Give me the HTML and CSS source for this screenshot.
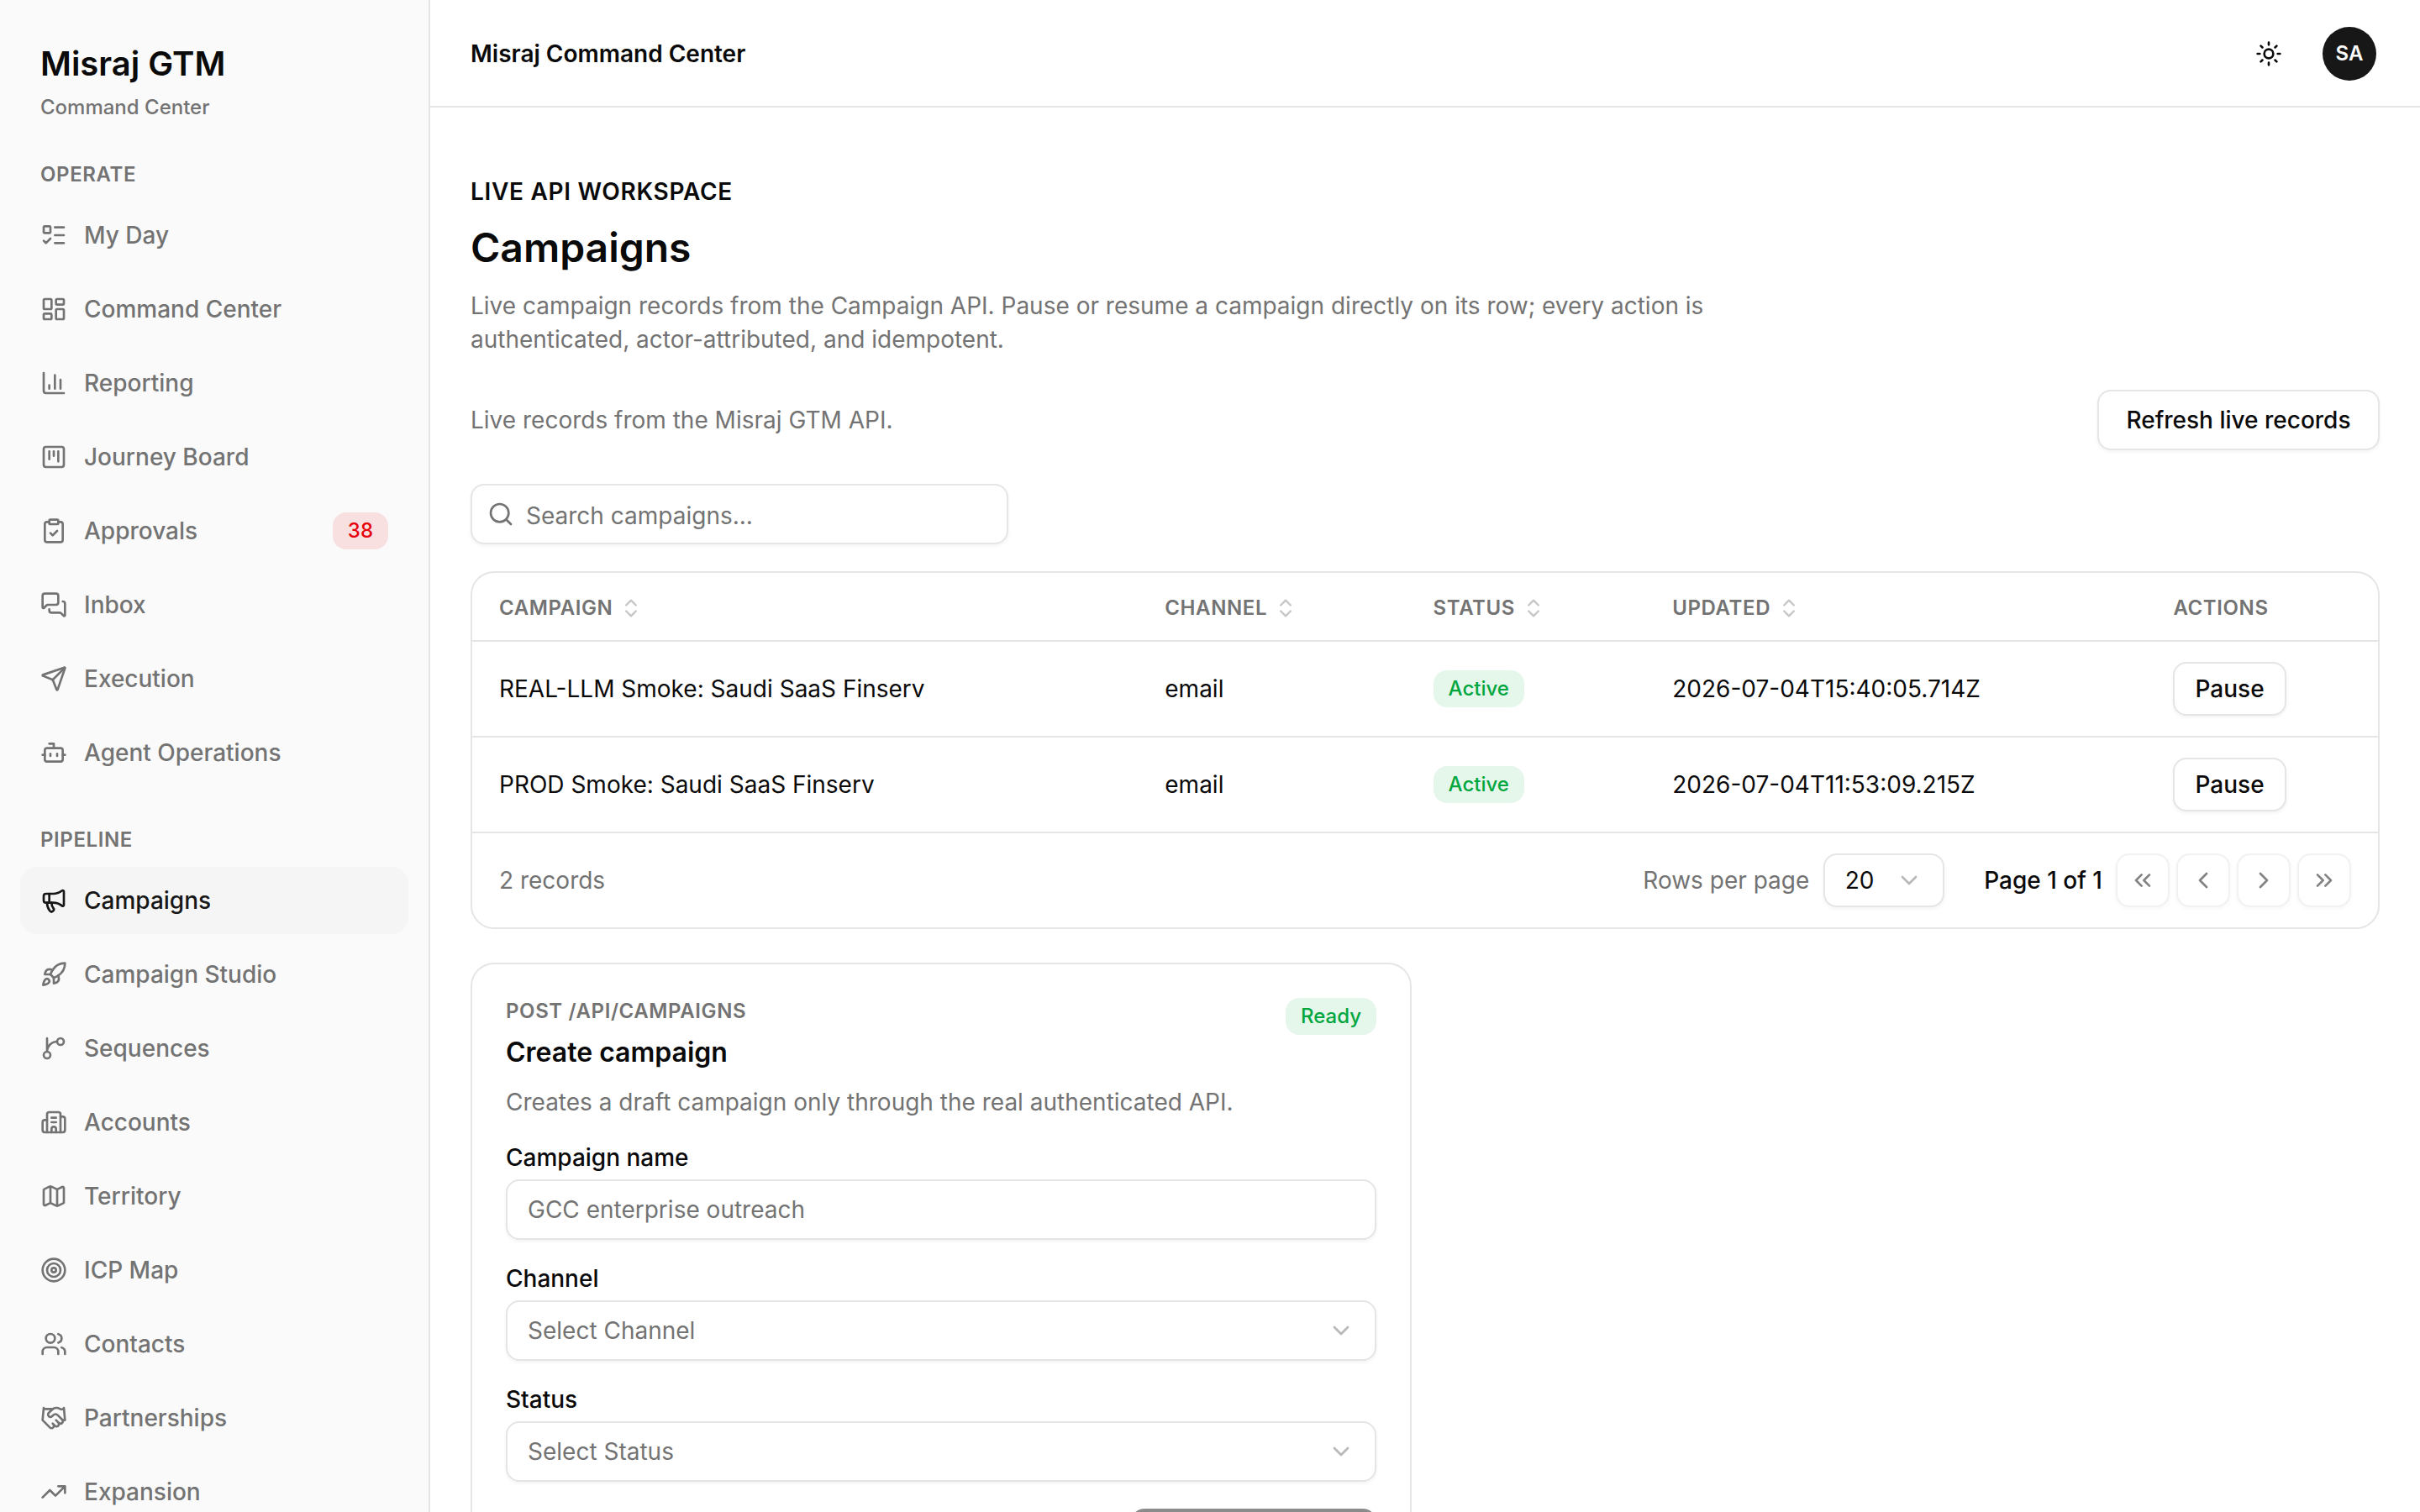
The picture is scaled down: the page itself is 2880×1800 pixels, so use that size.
FILE: index.html
```html
<!DOCTYPE html>
<html lang="en">
<head>
<meta charset="utf-8">
<title>Misraj Command Center</title>
<link rel="stylesheet" href="styles.css">
</head>
<body>
<div class="app">
  <aside class="sidebar">
    <div class="brand">
      <div class="brand-name">Misraj GTM</div>
      <div class="brand-sub">Command Center</div>
    </div>
    <nav class="nav">
      <section class="nav-group">
        <h2 class="nav-heading">Operate</h2>
        <a class="nav-item"><svg class="icon" viewBox="0 0 24 24"><path d="M13 5h8M13 12h8M13 19h8M3 17l2 2 4-4"/><rect x="3" y="4" width="6" height="6" rx="1"/></svg><span>My Day</span></a>
        <a class="nav-item"><svg class="icon" viewBox="0 0 24 24"><rect width="7" height="9" x="3" y="3" rx="1"/><rect width="7" height="5" x="14" y="3" rx="1"/><rect width="7" height="9" x="14" y="12" rx="1"/><rect width="7" height="5" x="3" y="16" rx="1"/></svg><span>Command Center</span></a>
        <a class="nav-item"><svg class="icon" viewBox="0 0 24 24"><path d="M3 3v16a2 2 0 0 0 2 2h16M18 17V9M13 17V5M8 17v-3"/></svg><span>Reporting</span></a>
        <a class="nav-item"><svg class="icon" viewBox="0 0 24 24"><rect width="18" height="18" x="3" y="3" rx="2"/><path d="M8 7v7M12 7v4M16 7v9"/></svg><span>Journey Board</span></a>
        <a class="nav-item"><svg class="icon" viewBox="0 0 24 24"><rect width="8" height="4" x="8" y="2" rx="1"/><path d="M16 4h2a2 2 0 0 1 2 2v14a2 2 0 0 1-2 2H6a2 2 0 0 1-2-2V6a2 2 0 0 1 2-2h2M9 14l2 2 4-4"/></svg><span>Approvals</span><span class="badge badge-red nav-count">38</span></a>
        <a class="nav-item"><svg class="icon" viewBox="0 0 24 24"><path d="M16 10a2 2 0 0 1-2 2H6.828a2 2 0 0 0-1.414.586l-2.202 2.202A.71.71 0 0 1 2 14.286V4a2 2 0 0 1 2-2h10a2 2 0 0 1 2 2z"/><path d="M20 9a2 2 0 0 1 2 2v10.286a.71.71 0 0 1-1.212.502l-2.202-2.202A2 2 0 0 0 17.172 19H10a2 2 0 0 1-2-2v-1"/></svg><span>Inbox</span></a>
        <a class="nav-item"><svg class="icon" viewBox="0 0 24 24"><path d="M14.536 21.686a.5.5 0 0 0 .937-.024l6.5-19a.496.496 0 0 0-.635-.635l-19 6.5a.5.5 0 0 0-.024.937l7.93 3.18a2 2 0 0 1 1.112 1.11z"/><path d="m21.854 2.147-10.94 10.939"/></svg><span>Execution</span></a>
        <a class="nav-item"><svg class="icon" viewBox="0 0 24 24"><path d="M12 8V4H8"/><rect width="16" height="12" x="4" y="8" rx="2"/><path d="M2 14h2M20 14h2M15 13v2M9 13v2"/></svg><span>Agent Operations</span></a>
      </section>
      <section class="nav-group">
        <h2 class="nav-heading">Pipeline</h2>
        <a class="nav-item is-active"><svg class="icon" viewBox="0 0 24 24"><path d="M11 6a13 13 0 0 0 8.4-2.8A1 1 0 0 1 21 4v12a1 1 0 0 1-1.6.8A13 13 0 0 0 11 14H5a2 2 0 0 1-2-2V8a2 2 0 0 1 2-2z"/><path d="M6 14a12 12 0 0 0 2.4 7.2 2 2 0 0 0 3.2-2.4A8 8 0 0 1 10 14M8 6v8"/></svg><span>Campaigns</span></a>
        <a class="nav-item"><svg class="icon" viewBox="0 0 24 24"><path d="M4.5 16.5c-1.5 1.26-2 5-2 5s3.74-.5 5-2c.71-.84.7-2.13-.09-2.91a2.18 2.18 0 0 0-2.91-.09z"/><path d="m12 15-3-3a22 22 0 0 1 2-3.95A12.88 12.88 0 0 1 22 2c0 2.72-.78 7.5-6 11a22.35 22.35 0 0 1-4 2z"/><path d="M9 12H4s.55-3.03 2-4c1.62-1.08 5 0 5 0M12 15v5s3.03-.55 4-2c1.08-1.62 0-5 0-5"/></svg><span>Campaign Studio</span></a>
        <a class="nav-item"><svg class="icon" viewBox="0 0 24 24"><path d="M15 6a9 9 0 0 0-9 9V3"/><circle cx="18" cy="6" r="3"/><circle cx="6" cy="18" r="3"/></svg><span>Sequences</span></a>
        <a class="nav-item"><svg class="icon" viewBox="0 0 24 24"><path d="M10 12h4M10 8h4M14 21v-3a2 2 0 0 0-4 0v3"/><path d="M6 10H4a2 2 0 0 0-2 2v7a2 2 0 0 0 2 2h16a2 2 0 0 0 2-2V9a2 2 0 0 0-2-2h-2"/><path d="M6 21V5a2 2 0 0 1 2-2h8a2 2 0 0 1 2 2v16"/></svg><span>Accounts</span></a>
        <a class="nav-item"><svg class="icon" viewBox="0 0 24 24"><path d="M14.106 5.553a2 2 0 0 0 1.788 0l3.659-1.83A1 1 0 0 1 21 4.619v12.764a1 1 0 0 1-.553.894l-4.553 2.277a2 2 0 0 1-1.788 0l-4.212-2.106a2 2 0 0 0-1.788 0l-3.659 1.83A1 1 0 0 1 3 19.381V6.618a1 1 0 0 1 .553-.894l4.553-2.277a2 2 0 0 1 1.788 0zM15 5.764v15M9 3.236v15"/></svg><span>Territory</span></a>
        <a class="nav-item"><svg class="icon" viewBox="0 0 24 24"><circle cx="12" cy="12" r="10"/><circle cx="12" cy="12" r="6"/><circle cx="12" cy="12" r="2"/></svg><span>ICP Map</span></a>
        <a class="nav-item"><svg class="icon" viewBox="0 0 24 24"><path d="M16 21v-2a4 4 0 0 0-4-4H6a4 4 0 0 0-4 4v2M16 3.128a4 4 0 0 1 0 7.744M22 21v-2a4 4 0 0 0-3-3.87"/><circle cx="9" cy="7" r="4"/></svg><span>Contacts</span></a>
        <a class="nav-item"><svg class="icon" viewBox="0 0 24 24"><path d="m11 17 2 2a1 1 0 1 0 3-3"/><path d="m14 14 2.5 2.5a1 1 0 1 0 3-3l-3.88-3.88a3 3 0 0 0-4.24 0l-.88.88a1 1 0 1 1-3-3l2.81-2.81a5.79 5.79 0 0 1 7.06-.87l.47.28a2 2 0 0 0 1.42.25L21 4"/><path d="m21 3 1 11h-2M3 3 2 14l6.5 6.5a1 1 0 1 0 3-3M3 4h8"/></svg><span>Partnerships</span></a>
        <a class="nav-item"><svg class="icon" viewBox="0 0 24 24"><path d="M16 7h6v6M22 7l-8.5 8.5-5-5L2 17"/></svg><span>Expansion</span></a>
      </section>
    </nav>
  </aside>

  <div class="page">
    <header class="topbar">
      <div class="topbar-title">Misraj Command Center</div>
      <div class="topbar-actions">
        <svg class="icon" viewBox="0 0 24 24"><circle cx="12" cy="12" r="4"/><path d="M12 2v2M12 20v2M4.93 4.93l1.41 1.41M17.66 17.66l1.41 1.41M2 12h2M20 12h2M6.34 17.66l-1.41 1.41M19.07 4.93l-1.41 1.41"/></svg>
        <div class="avatar">SA</div>
      </div>
    </header>

    <main class="content">
      <div class="page-head">
        <p class="eyebrow">Live API workspace</p>
        <h1 class="page-title">Campaigns</h1>
        <p class="lead">Live campaign records from the Campaign API. Pause or resume a campaign directly on its row; every action is authenticated, actor-attributed, and idempotent.</p>
      </div>

      <div class="toolbar">
        <p class="muted">Live records from the Misraj GTM API.</p>
        <button class="btn btn-lg">Refresh live records</button>
      </div>

      <div class="search">
        <svg class="icon" viewBox="0 0 24 24"><path d="m21 21-4.34-4.34"/><circle cx="11" cy="11" r="8"/></svg>
        <span class="search-text">Search campaigns...</span>
      </div>

      <div class="table-card">
        <div class="row row-head">
          <div class="cell"><span>Campaign</span><svg class="icon sort" viewBox="0 0 24 24"><path d="m7 15 5 5 5-5M7 9l5-5 5 5"/></svg></div>
          <div class="cell"><span>Channel</span><svg class="icon sort" viewBox="0 0 24 24"><path d="m7 15 5 5 5-5M7 9l5-5 5 5"/></svg></div>
          <div class="cell"><span>Status</span><svg class="icon sort" viewBox="0 0 24 24"><path d="m7 15 5 5 5-5M7 9l5-5 5 5"/></svg></div>
          <div class="cell"><span>Updated</span><svg class="icon sort" viewBox="0 0 24 24"><path d="m7 15 5 5 5-5M7 9l5-5 5 5"/></svg></div>
          <div class="cell"><span>Actions</span></div>
        </div>
        <div class="row">
          <div class="cell"><span>REAL-LLM Smoke: Saudi SaaS Finserv</span></div>
          <div class="cell"><span>email</span></div>
          <div class="cell"><span class="badge badge-green">Active</span></div>
          <div class="cell"><span>2026-07-04T15:40:05.714Z</span></div>
          <div class="cell"><button class="btn">Pause</button></div>
        </div>
        <div class="row">
          <div class="cell"><span>PROD Smoke: Saudi SaaS Finserv</span></div>
          <div class="cell"><span>email</span></div>
          <div class="cell"><span class="badge badge-green">Active</span></div>
          <div class="cell"><span>2026-07-04T11:53:09.215Z</span></div>
          <div class="cell"><button class="btn">Pause</button></div>
        </div>
        <div class="table-foot">
          <span class="muted">2 records</span>
          <div class="pager">
            <div class="page-size">
              <span class="muted">Rows per page</span>
              <div class="select select-sm"><span>20</span><svg class="icon chevron" viewBox="0 0 24 24"><path d="m6 9 6 6 6-6"/></svg></div>
            </div>
            <div class="page-nav">
              <span class="page-label">Page 1 of 1</span>
              <div class="page-buttons">
                <button class="btn btn-icon" disabled><svg class="icon" viewBox="0 0 24 24"><path d="m11 17-5-5 5-5M18 17l-5-5 5-5"/></svg></button>
                <button class="btn btn-icon" disabled><svg class="icon" viewBox="0 0 24 24"><path d="m15 18-6-6 6-6"/></svg></button>
                <button class="btn btn-icon" disabled><svg class="icon" viewBox="0 0 24 24"><path d="m9 18 6-6-6-6"/></svg></button>
                <button class="btn btn-icon" disabled><svg class="icon" viewBox="0 0 24 24"><path d="m6 17 5-5-5-5M13 17l5-5-5-5"/></svg></button>
              </div>
            </div>
          </div>
        </div>
      </div>

      <section class="form-card">
        <div class="form-head">
          <div class="form-titles">
            <div class="form-kicker">POST /api/campaigns</div>
            <h2 class="form-title">Create campaign</h2>
          </div>
          <span class="badge badge-green">Ready</span>
        </div>
        <p class="form-desc">Creates a draft campaign only through the real authenticated API.</p>
        <div class="field">
          <label class="label">Campaign name</label>
          <div class="select placeholder"><span>GCC enterprise outreach</span></div>
        </div>
        <div class="field">
          <label class="label">Channel</label>
          <div class="select placeholder"><span>Select Channel</span><svg class="icon chevron" viewBox="0 0 24 24"><path d="m6 9 6 6 6-6"/></svg></div>
        </div>
        <div class="field">
          <label class="label">Status</label>
          <div class="select placeholder"><span>Select Status</span><svg class="icon chevron" viewBox="0 0 24 24"><path d="m6 9 6 6 6-6"/></svg></div>
        </div>
        <button class="submit" disabled></button>
      </section>
    </main>
  </div>
</div>
</body>
</html>
```
FILE: styles.css
```css
*, *::before, *::after { box-sizing: border-box; }

:root {
  --fg: #0a0a0a;
  --muted: #737373;
  --border: #e5e5e5;
  --shadow: 0 2px 4px rgba(0, 0, 0, 0.05);
}

body, h1, h2, p { margin: 0; }

body {
  height: 1800px;
  overflow: hidden;
  background: #fff;
  color: var(--fg);
  font-family: Inter, "Liberation Sans", sans-serif;
  font-size: 28px;
  line-height: 40px;
  -webkit-font-smoothing: antialiased;
}

button { font: inherit; color: inherit; }

.app { display: flex; height: 1800px; overflow: hidden; }

.icon {
  flex: none;
  width: 32px;
  height: 32px;
  fill: none;
  stroke: currentColor;
  stroke-width: 2;
  stroke-linecap: round;
  stroke-linejoin: round;
}

/* Sidebar */
.sidebar {
  flex: none;
  display: flex;
  flex-direction: column;
  gap: 48px;
  width: 512px;
  padding: 48px 24px 0;
  border-right: 2px solid var(--border);
  background: #fafafa;
}

.brand { display: flex; flex-direction: column; gap: 8px; padding: 0 24px; }
.brand-name { font-size: 40px; line-height: 56px; font-weight: 600; }
.brand-sub { font-size: 24px; line-height: 32px; font-weight: 500; color: var(--muted); }

.nav { display: flex; flex-direction: column; gap: 48px; }
.nav-group { display: flex; flex-direction: column; gap: 8px; }

.nav-heading {
  margin-bottom: 8px;
  padding: 0 24px;
  font-size: 24px;
  line-height: 32px;
  font-weight: 600;
  letter-spacing: 0.025em;
  text-transform: uppercase;
  color: var(--muted);
}

.nav-item {
  display: flex;
  align-items: center;
  gap: 20px;
  height: 80px;
  padding: 0 24px;
  border-radius: 20px;
  font-weight: 500;
  color: var(--muted);
}
.nav-item.is-active { background: #f5f5f5; color: #171717; }
.nav-count { margin-left: auto; }

.badge {
  display: inline-flex;
  align-items: center;
  height: 44px;
  padding: 0 18px;
  border-radius: 16px;
  font-size: 24px;
  line-height: 32px;
  font-weight: 500;
}
.badge-red { background: rgba(231, 0, 11, 0.1); color: #e7000b; }
.badge-green { background: rgba(0, 166, 62, 0.1); color: #00a63e; }

/* Top bar */
.page { flex: 1; min-width: 0; display: flex; flex-direction: column; }

.topbar {
  flex: none;
  display: flex;
  align-items: center;
  justify-content: space-between;
  height: 128px;
  padding: 2px 52px 0 48px;
  border-bottom: 2px solid var(--border);
}
.topbar-title { font-weight: 600; }
.topbar-actions { display: flex; align-items: center; gap: 48px; }

.avatar {
  display: flex;
  align-items: center;
  justify-content: center;
  width: 64px;
  height: 64px;
  border-radius: 50%;
  background: #171717;
  color: #fafafa;
  font-size: 24px;
  font-weight: 600;
}

/* Content */
.content { display: flex; flex-direction: column; padding: 80px 48px 0; }
.muted { color: var(--muted); }

.eyebrow { font-weight: 600; letter-spacing: 0.025em; text-transform: uppercase; }
.page-title { margin-top: 17px; font-size: 48px; line-height: 60px; font-weight: 600; }
.lead { max-width: 1536px; margin-top: 19px; color: var(--muted); }

.toolbar { display: flex; align-items: center; justify-content: space-between; margin-top: 40px; }

.btn {
  display: inline-flex;
  align-items: center;
  justify-content: center;
  height: 64px;
  padding: 0 24px;
  border: 2px solid var(--border);
  border-radius: 16px;
  background: #fff;
  box-shadow: var(--shadow);
  font-weight: 500;
}
.btn-lg { min-width: 336px; height: 72px; padding: 0 32px; }
.btn-icon { width: 64px; padding: 0; }
.btn:disabled { opacity: 0.5; }

.search {
  display: flex;
  align-items: center;
  gap: 14px;
  width: 640px;
  height: 72px;
  margin-top: 40px;
  padding: 0 18px;
  border: 2px solid var(--border);
  border-radius: 16px;
  box-shadow: var(--shadow);
  color: var(--muted);
}
.search-text { padding-top: 3px; }

/* Records table */
.table-card {
  margin-top: 32px;
  border: 2px solid var(--border);
  border-radius: 28px;
}

.row {
  display: grid;
  grid-template-columns: 792.3px 319.3px 284.7px 596.2px 1fr;
  height: 114px;
  border-bottom: 2px solid var(--border);
}
.row-head {
  height: 82px;
  padding-top: 4px;
  font-size: 24px;
  font-weight: 600;
  letter-spacing: 0.025em;
  text-transform: uppercase;
  color: var(--muted);
}
.cell { display: flex; align-items: center; gap: 8px; padding: 0 32px; white-space: nowrap; }
.sort { width: 28px; height: 28px; opacity: 0.4; }

.table-foot {
  display: flex;
  align-items: center;
  justify-content: space-between;
  height: 112px;
  padding: 0 32px;
}
.pager { display: flex; align-items: center; gap: 47.5px; }
.page-size { display: flex; align-items: center; gap: 16.5px; }
.page-nav { display: flex; align-items: center; gap: 16px; }
.page-label { font-weight: 500; }
.page-buttons { display: flex; gap: 8px; }

.select {
  display: flex;
  align-items: center;
  justify-content: space-between;
  height: 72px;
  padding: 0 24px;
  border: 2px solid var(--border);
  border-radius: 16px;
  background: #fff;
  box-shadow: var(--shadow);
}
.select-sm { width: 144px; height: 64px; }
.placeholder { color: var(--muted); }
.chevron { color: var(--muted); opacity: 0.5; }

/* Create form */
.form-card {
  display: flex;
  flex-direction: column;
  gap: 32px;
  width: 1120px;
  margin-top: 40px;
  padding: 40px;
  border: 2px solid var(--border);
  border-radius: 28px;
}
.form-head { display: flex; align-items: flex-start; justify-content: space-between; }
.form-kicker { font-size: 24px; line-height: 32px; font-weight: 600; letter-spacing: 0.025em; text-transform: uppercase; color: var(--muted); }
.form-title { margin-top: 9px; font-size: 32px; line-height: 48px; font-weight: 600; }
.form-desc { margin-top: -17px; color: var(--muted); }
.field { display: flex; flex-direction: column; gap: 12px; }
.label { line-height: 28px; font-weight: 500; }

.submit {
  align-self: flex-end;
  flex: none;
  width: 292px;
  height: 72px;
  border: 0;
  border-radius: 16px;
  background: #171717;
  opacity: 0.5;
}
```
